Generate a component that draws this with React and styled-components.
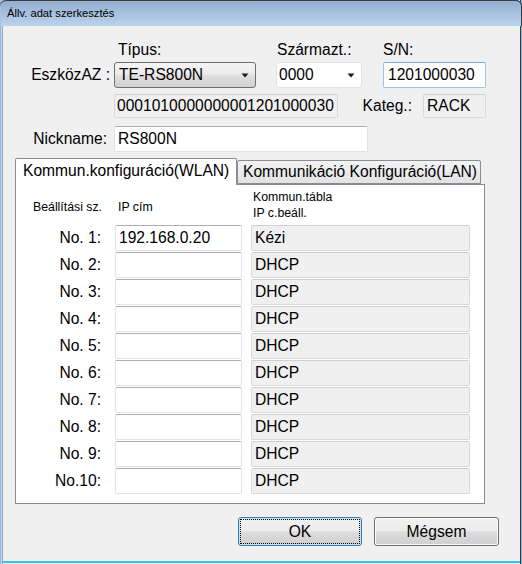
import React from 'react'
import styled, { createGlobalStyle } from 'styled-components'

const GlobalStyle = createGlobalStyle`
  html, body {
    margin: 0;
    padding: 0;
    background: #f0f0f0;
  }
  body {
    font-family: "Liberation Sans", Arial, sans-serif;
  }
`

const Window = styled.div`
  width: 522px;
  height: 564px;
  box-sizing: border-box;
  background: #f0f0f0;
  display: flex;
  flex-direction: column;
  font-family: "Liberation Sans", Arial, sans-serif;
  font-size: 15.6px;
  color: #000;
  box-shadow:
    inset 1px 0 0 #8db6e0,
    inset 2px 0 0 #c7dcf1,
    inset 3px 0 0 #9aa7b6,
    inset -1px 0 0 #7fb2e3,
    inset -2px 0 0 #3c3c3c,
    inset 0 -1px 0 #f0f0f0,
    inset 0 -3px 0 #35c2ec;
`

const TitleBar = styled.div`
  height: 26px;
  flex: none;
  display: flex;
  align-items: center;
  padding-left: 7px;
  font-family: "Liberation Sans", Arial, sans-serif;
  font-size: 11.2px;
  color: #000;
  border-radius: 6px 6px 0 0;
  background: linear-gradient(#90acce, #bcd3ec);
  box-shadow: inset 0 1px 0 #3a3a3a, inset -1px 0 0 #3a3a3a, inset 1px 0 0 #a9c4e2;
`

const TopGrid = styled.div`
  display: grid;
  grid-template-columns: 114px 162px 107px 103px;
  grid-template-rows: 18px 26px;
  row-gap: 3px;
  margin-top: 15px;
`

const ColHead = styled.div`
  padding-left: ${({ $indent }) => $indent || 0}px;
  line-height: 18px;
`

const FieldLabel = styled.div`
  display: flex;
  align-items: center;
  justify-content: flex-end;
  padding-right: ${({ $pad }) => $pad || 4}px;
  width: ${({ $width }) => ($width ? `${$width}px` : 'auto')};
  box-sizing: border-box;
  white-space: nowrap;
`

const Combo = styled.div`
  width: ${({ $width }) => $width}px;
  height: 26px;
  box-sizing: border-box;
  display: flex;
  align-items: center;
  justify-content: space-between;
  padding: 0 6px 0 ${({ $pl }) => $pl || 3}px;
  border-radius: 3px;
  border: 1px solid ${({ $flat }) => ($flat ? '#e3e3e3' : '#707070')};
  background: ${({ $flat }) =>
    $flat ? '#fff' : 'linear-gradient(#f4f4f4 0%, #ececec 45%, #dedede 55%, #d2d2d2 100%)'};
`

const Arrow = () => (
  <svg width="8" height="5" viewBox="0 0 8 5">
    <path d="M0.5 0.5h7l-3.5 4z" fill="#1a1a1a" />
  </svg>
)

const TextBox = styled.div`
  width: ${({ $width }) => $width}px;
  height: ${({ $height }) => $height || 26}px;
  box-sizing: border-box;
  display: flex;
  align-items: center;
  padding-left: ${({ $pl }) => $pl || 3}px;
  white-space: nowrap;
  overflow: hidden;
  border-radius: 2px;
  background: ${({ $readOnly }) => ($readOnly ? '#f0f0f0' : '#fff')};
  border: 1px solid ${({ $readOnly, $focus }) => ($focus ? '#9cc3e8' : $readOnly ? '#d9d9d9' : '#e2e3ea')};
  border-top-color: ${({ $readOnly, $focus }) => ($focus ? '#7fa9d6' : $readOnly ? '#cfcfcf' : '#abadb3')};
`

const FieldRow = styled.div`
  display: flex;
  align-items: center;
  margin-top: ${({ $mt }) => $mt}px;
  padding-left: ${({ $pl }) => $pl || 0}px;
`

const TabStrip = styled.div`
  display: flex;
  align-items: flex-end;
  height: 26px;
  margin-top: 6px;
  padding-left: 15px;
`

const Tab = styled.div`
  position: relative;
  z-index: ${({ $active }) => ($active ? 1 : 0)};
  box-sizing: border-box;
  width: ${({ $width }) => $width}px;
  height: ${({ $active }) => ($active ? 27 : 24)}px;
  margin-bottom: ${({ $active }) => ($active ? -1 : 0)}px;
  display: flex;
  align-items: center;
  padding-left: ${({ $active }) => ($active ? 7 : 5)}px;
  padding-bottom: ${({ $active }) => ($active ? 2 : 0)}px;
  white-space: nowrap;
  border: 1px solid #898c95;
  border-bottom: ${({ $active }) => ($active ? 'none' : '1px solid #898c95')};
  border-radius: 2px 2px 0 0;
  background: ${({ $active }) => ($active ? '#fff' : 'linear-gradient(#f3f3f3, #e2e2e2)')};
`

const Panel = styled.div`
  margin-left: 15px;
  width: 470px;
  height: 320px;
  box-sizing: border-box;
  border: 1px solid #898c95;
  background: #fff;
  display: grid;
  grid-template-columns: 99px 136px 219px;
  grid-template-rows: 35px;
  grid-auto-rows: 26px;
  row-gap: 1px;
  align-content: start;
  padding-top: 4px;
`

const HeadCell = styled.div`
  height: 32px;
  font-size: 12.3px;
  line-height: 16px;
  padding-left: ${({ $pl }) => $pl}px;
  padding-top: ${({ $pt }) => $pt || 0}px;
  box-sizing: border-box;
  white-space: nowrap;
`

const RowLabel = styled.div`
  display: flex;
  align-items: center;
  justify-content: flex-end;
  padding-right: 14px;
  white-space: nowrap;
`

const ButtonRow = styled.div`
  display: flex;
  justify-content: flex-end;
  gap: 12px;
  margin-top: 13px;
  padding-right: 23px;
`

const Button = styled.button`
  width: ${({ $width }) => $width || 125}px;
  height: 29px;
  font-family: inherit;
  font-size: 15.6px;
  color: #000;
  border-radius: 3px;
  border: 1px solid ${({ $default }) => ($default ? '#3c7fb1' : '#707070')};
  background: linear-gradient(#f2f2f2 0%, #ebebeb 48%, #dddddd 52%, #cfcfcf 100%);
  box-shadow: inset 0 0 0 1px ${({ $default }) => ($default ? '#c4e5f6' : '#fbfbfb')};
  outline: ${({ $default }) => ($default ? '1px dotted #000' : 'none')};
  outline-offset: -3px;
  padding: 0;
`

const rows = [
  { no: 'No. 1:', ip: '192.168.0.20', mode: 'Kézi' },
  { no: 'No. 2:', ip: '', mode: 'DHCP' },
  { no: 'No. 3:', ip: '', mode: 'DHCP' },
  { no: 'No. 4:', ip: '', mode: 'DHCP' },
  { no: 'No. 5:', ip: '', mode: 'DHCP' },
  { no: 'No. 6:', ip: '', mode: 'DHCP' },
  { no: 'No. 7:', ip: '', mode: 'DHCP' },
  { no: 'No. 8:', ip: '', mode: 'DHCP' },
  { no: 'No. 9:', ip: '', mode: 'DHCP' },
  { no: 'No.10:', ip: '', mode: 'DHCP' },
]

export default function App() {
  return (
    <>
      <GlobalStyle />
      <Window>
        <TitleBar>Állv. adat szerkesztés</TitleBar>

        <TopGrid>
          <div />
          <ColHead $indent={4}>Típus:</ColHead>
          <ColHead $indent={1}>Származt.:</ColHead>
          <ColHead>S/N:</ColHead>

          <FieldLabel>EszközAZ :</FieldLabel>
          <Combo $width={142} $pl={4}>
            <span>TE-RS800N</span>
            <Arrow />
          </Combo>
          <Combo $width={86} $flat $pl={2}>
            <span>0000</span>
            <Arrow />
          </Combo>
          <TextBox $width={103} $focus $pl={4}>1201000030</TextBox>
        </TopGrid>

        <FieldRow $mt={6} $pl={114}>
          <TextBox $width={224} $height={24} $readOnly $pl={2}>
            0001010000000001201000030
          </TextBox>
          <FieldLabel $width={85} $pad={11}>Kateg.:</FieldLabel>
          <TextBox $width={63} $height={24} $readOnly $pl={3}>
            RACK
          </TextBox>
        </FieldRow>

        <FieldRow $mt={8}>
          <FieldLabel $width={114} $pad={7}>Nickname:</FieldLabel>
          <TextBox $width={254} $pl={3}>RS800N</TextBox>
        </FieldRow>

        <TabStrip>
          <Tab $active $width={222}>Kommun.konfiguráció(WLAN)</Tab>
          <Tab $width={244}>Kommunikáció Konfiguráció(LAN)</Tab>
        </TabStrip>

        <Panel>
          <HeadCell $pl={17} $pt={10}>Beállítási sz.</HeadCell>
          <HeadCell $pl={3} $pt={10}>IP cím</HeadCell>
          <HeadCell $pl={2}>
            Kommun.tábla
            <br />
            IP c.beáll.
          </HeadCell>
          {rows.map((r) => (
            <React.Fragment key={r.no}>
              <RowLabel>{r.no}</RowLabel>
              <TextBox $width={127} $pl={3}>{r.ip}</TextBox>
              <TextBox $width={219} $readOnly $pl={3}>{r.mode}</TextBox>
            </React.Fragment>
          ))}
        </Panel>

        <ButtonRow>
          <Button $default $width={124}>OK</Button>
          <Button>Mégsem</Button>
        </ButtonRow>
      </Window>
    </>
  )
}
